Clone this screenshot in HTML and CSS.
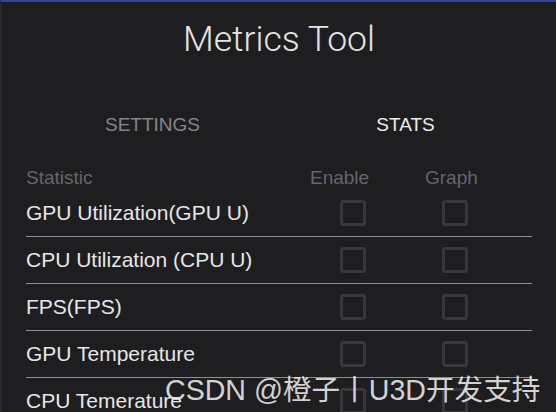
FILE: index.html
```html
<!DOCTYPE html>
<html lang="en">
<head>
  <meta charset="UTF-8" />
  <meta name="viewport" content="width=device-width, initial-scale=1.0" />
  <title>Metrics Tool</title>
  <link rel="stylesheet" href="styles.css">
</head>
<body>
  <div class="screen">
    <h1 class="title">Metrics Tool</h1>

    <div class="tabs">
      <div class="tab">SETTINGS</div>
      <div class="tab active">STATS</div>
    </div>

    <div class="stats">
      <div class="stats-head">
        <span>Statistic</span>
        <span>Enable</span>
        <span>Graph</span>
      </div>

      <div class="stat-row">
        <span class="stat-name">GPU Utilization(GPU U)</span>
        <span class="check"></span>
        <span class="check"></span>
      </div>
      <div class="stat-row">
        <span class="stat-name">CPU Utilization (CPU U)</span>
        <span class="check"></span>
        <span class="check"></span>
      </div>
      <div class="stat-row">
        <span class="stat-name">FPS(FPS)</span>
        <span class="check"></span>
        <span class="check"></span>
      </div>
      <div class="stat-row">
        <span class="stat-name">GPU Temperature</span>
        <span class="check"></span>
        <span class="check"></span>
      </div>
      <div class="stat-row">
        <span class="stat-name">CPU Temerature</span>
        <span class="check"></span>
        <span class="check"></span>
      </div>
    </div>

    <!-- 水印 -->
    <div class="watermark">CSDN @橙子丨U3D开发支持</div>
  </div>
</body>
</html>
```

FILE: styles.css
```css
body {
  margin: 0;
  background-color: #1e1e20;
  font-family: "Liberation Sans", Arial, sans-serif;
  overflow: hidden;
}

.screen {
  position: relative;
  height: 410px;
  border-top: 2px solid #34449c;
  border-left: 2px solid #2a2a2d;
}

.title {
  margin: 15px 0 0;
  font-family: Roboto, sans-serif;
  font-weight: 300;
  font-size: 35.5px;
  line-height: 44px;
  text-align: center;
  color: #e4e4e6;
}

.tabs {
  display: flex;
  margin: 44px 24px 0 24px;
}

.tab {
  flex: 1;
  text-align: center;
  font-size: 19px;
  line-height: 40px;
  color: #85858c;
}

.tab.active {
  color: #ececee;
}

.stats {
  margin: 21px 24px 0 24px;
}

.stats-head {
  display: grid;
  grid-template-columns: 1fr 115px 107px;
  font-size: 19px;
  line-height: 24px;
  color: #65656c;
}

.stat-row {
  display: grid;
  grid-template-columns: 1fr 102px 102px 26px;
  align-items: center;
  height: 46px;
  border-bottom: 1px solid #8e8e98;
}

.stat-name {
  font-size: 21px;
  color: #e6e6e8;
}

.check {
  justify-self: center;
  width: 20px;
  height: 20px;
  border: 3px solid #37373d;
  border-radius: 3px;
}

.watermark {
  position: absolute;
  left: 163px;
  top: 365px;
  font-family: "Liberation Sans", "Noto Sans CJK SC", sans-serif;
  font-size: 28.6px;
  color: rgba(236, 236, 236, 0.88);
  white-space: nowrap;
}
```
